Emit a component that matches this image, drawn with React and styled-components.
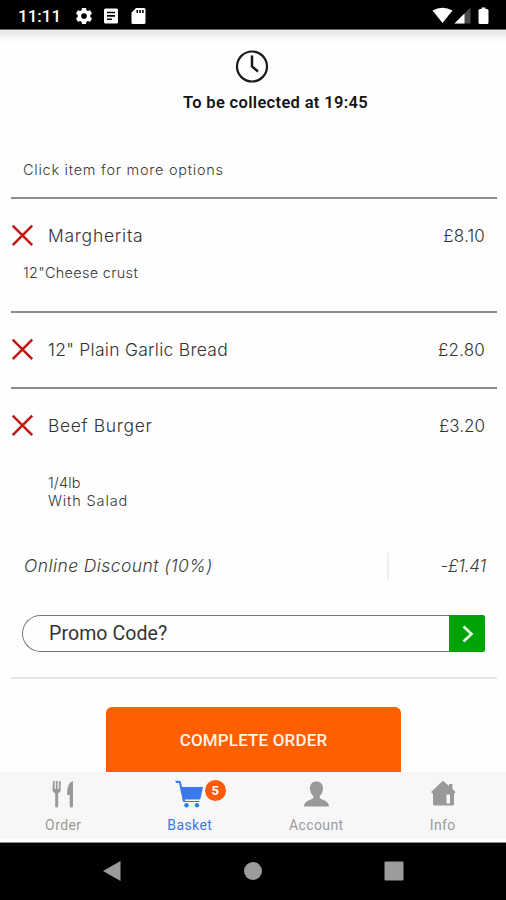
import React from 'react';
import styled, { createGlobalStyle } from 'styled-components';

const GlobalStyle = createGlobalStyle`
  * {
    box-sizing: border-box;
  }
  body {
    margin: 0;
    background: #ffffff;
    font-family: Roboto, sans-serif;
  }
  svg {
    display: block;
  }
`;

const Screen = styled.div`
  display: flex;
  flex-direction: column;
  width: 506px;
  height: 900px;
  overflow: hidden;
  background: #fefefe;
`;

const StatusBar = styled.div`
  display: flex;
  flex: none;
  justify-content: space-between;
  height: 30px;
  padding: 0 16px 0 18px;
  background: #000000;
  border-bottom: 1px solid #6c6c6c;
`;

const StatusGroup = styled.div`
  display: flex;
  align-items: center;
  padding-top: 2px;
`;

const Clock = styled.span`
  width: 56px;
  color: #ffffff;
  font-size: 17px;
  font-weight: 500;
`;

const TopShade = styled.div`
  flex: none;
  height: 14px;
  background: linear-gradient(#e8e8e8 0, #eeeeee 5px, #f6f6f6 6px, #fefefe 14px);
`;

const Content = styled.main`
  flex: none;
  height: 728px;
  overflow: hidden;
`;

const Header = styled.header`
  height: 108px;
  padding-top: 6px;
`;

const HeaderIcon = styled.div`
  padding-left: 235px;
`;

const Title = styled.h1`
  margin: 9px 0 0;
  padding-left: 183px;
  font-size: 16.5px;
  font-weight: 600;
  line-height: 20px;
  letter-spacing: 0.33px;
  color: #151515;
  white-space: nowrap;
`;

const Hint = styled.p`
  height: 45px;
  margin: 0;
  padding-left: 23px;
  font: 300 14.5px/36px Inter, sans-serif;
  letter-spacing: 0.74px;
  color: #3a3a3a;
`;

const Item = styled.section`
  height: ${(props) => props.$height};
  margin: 0 9px 0 11px;
  padding-top: 23px;
  border-top: 2px solid #8d8d8d;
`;

const ItemRow = styled.div`
  display: flex;
  align-items: center;
  height: 28px;
  padding-right: 12px;
`;

const ItemName = styled.span`
  flex: 1;
  margin-left: 14px;
  font: 300 17.5px/28px Inter, sans-serif;
  letter-spacing: ${(props) => props.$spacing};
  color: #333333;
`;

const Price = styled.span`
  font: 300 17px/28px Inter, sans-serif;
  letter-spacing: ${(props) => props.$spacing || '0'};
  color: #333333;
`;

const Note = styled.p`
  margin: 0;
  padding-left: ${(props) => props.$indent || '12px'};
  padding-top: ${(props) => props.$gap};
  font: 300 14.5px/18px Inter, sans-serif;
  letter-spacing: 0.3px;
  color: #363636;
`;

const NoteLine = styled.span`
  display: block;
  letter-spacing: ${(props) => props.$spacing};
`;

const Discount = styled.div`
  display: flex;
  align-items: center;
  height: 28px;
  margin-top: 42px;
  padding: 0 8px 0 13px;
  font: italic 300 17.5px/28px Inter, sans-serif;
  color: #3c3c3c;
`;

const DiscountLabel = styled.span`
  width: 363px;
  letter-spacing: 0.42px;
`;

const DiscountValue = styled.span`
  flex: 1;
  height: 27px;
  padding-right: 3px;
  border-left: 2px solid #efefef;
  font-size: 17px;
  line-height: 27px;
  letter-spacing: -0.2px;
  text-align: right;
`;

const Promo = styled.div`
  display: flex;
  width: 463px;
  height: 37px;
  margin: 35px 0 0 11px;
`;

const PromoField = styled.div`
  flex: 1;
  padding-left: 26px;
  border: 1px solid #777777;
  border-right: 0;
  border-radius: 19px 0 0 19px;
  font-size: 19.5px;
  line-height: 36px;
  letter-spacing: 0.1px;
  color: #333333;
`;

const PromoButton = styled.button`
  display: flex;
  align-items: center;
  justify-content: center;
  width: 36px;
  padding: 0 0 0 1px;
  border: 0;
  border-radius: 0 2px 2px 0;
  background: #00a406;
`;

const Checkout = styled.div`
  display: flex;
  justify-content: center;
  margin: 0 9px 0 11px;
  padding: 28px 1px 0 0;
  border-top: 2px solid #e4e7e7;
`;

const CompleteButton = styled.button`
  width: 295px;
  height: 80px;
  padding: 0 0 15px;
  border: 0;
  border-radius: 6px;
  background: #ff5f00;
  color: #fff2e6;
  font: 500 17px Roboto, sans-serif;
  letter-spacing: 0.15px;
`;

const TabBar = styled.nav`
  display: grid;
  flex: none;
  grid-template-columns: repeat(4, 1fr);
  height: 70px;
  background: #f7f7f7;
  border-bottom: 3px solid #ffffff;
`;

const Tab = styled.div`
  display: flex;
  flex-direction: column;
  align-items: center;
  padding-top: 8px;
  font-size: 14px;
  line-height: 18px;
  letter-spacing: 0.4px;
  color: ${(props) => (props.$active ? '#3b78ea' : '#9b9b9b')};
`;

const TabIcon = styled.div`
  position: relative;
  height: 36px;
`;

const Badge = styled.span`
  position: absolute;
  top: 0;
  left: 30px;
  width: 21px;
  height: 21px;
  border-radius: 50%;
  background: #ff5a08;
  color: #ffffff;
  font-size: 13px;
  font-weight: 700;
  line-height: 21px;
  letter-spacing: 0;
  text-align: center;
`;

const SystemBar = styled.div`
  display: flex;
  flex: 1;
  align-items: center;
  justify-content: space-between;
  padding: 0 102px 1px;
  background: #000000;
  border-top: 1px solid #8c8c8c;
`;

const Cross = () => (
  <svg width="23" height="24" viewBox="0 0 23 24">
    <path d="M1.700 1.700 21.200 21.200M21.200 1.700 1.700 21.200" stroke="#c01712" strokeWidth="2.500" />
  </svg>
);

const StatusIcons = () => (
  <svg width="72" height="18" viewBox="0 0 72 18" fill="#fff">
    <path
      fillRule="evenodd"
      d="M8 1h4l.5 2.2 1.4.8 2.2-.7 1.9 3.2-1.7 1.6v1.8l1.7 1.6-1.9 3.2-2.2-.7-1.4.8L12 17H8l-.5-2.2-1.4-.8-2.2.7L2 11.500l1.700-1.600V8.100L2 6.500l1.900-3.200 2.200.7 1.400-.8zM10 6.200a2.800 2.800 0 1 0 0 5.600 2.800 2.800 0 0 0 0-5.600z"
    />
    <path
      fillRule="evenodd"
      d="M31.500 1.500h11q1.500 0 1.500 1.500v12q0 1.500-1.500 1.500h-11q-1.500 0-1.500-1.500V3q0-1.500 1.500-1.500zM33 4.700v1.600h8V4.700zm0 3.400v1.600h8V8.100zm0 3.400v1.600h5v-1.600z"
    />
    <path
      fillRule="evenodd"
      d="M62 1h8q1.500 0 1.500 1.500v13q0 1.500-1.500 1.500H59q-1.500 0-1.500-1.500V5.500zM62.500 3v3h1.600V3zm2.800 0v3h1.600V3zm2.800 0v3h1.600V3z"
    />
  </svg>
);

const SignalIcons = () => (
  <svg width="58" height="18" viewBox="0 0 58 18" fill="#fff">
    <path d="M.5 3.500Q10.500-2 20.500 3.500L10.500 16z" />
    <path d="M22.500 16.500 38.500.5v16z" fill="#4b4b4b" />
    <path d="M22.500 16.500 32.500 6.500v10z" />
    <path d="M49.500.5h4V2H55q1.500 0 1.500 1.500v12q0 1.500-1.500 1.500h-7q-1.500 0-1.500-1.500v-12Q46.500 2 48 2h1.500z" />
  </svg>
);

const ClockIcon = () => (
  <svg width="34" height="34" viewBox="0 0 34 34" fill="none" stroke="#17191c">
    <circle cx="17" cy="16.500" r="15" strokeWidth="2.200" />
    <path d="M17 5.500v11l6 5" strokeWidth="2.500" />
  </svg>
);

const CutleryIcon = () => (
  <svg width="24" height="28" viewBox="0 0 24 28" fill="#999999">
    <path d="M2 1h1.600v8h1.200V1h1.800v8h1.200V1h1.800v8h.2c0 2.500-1 3.700-2.600 4.200V26q0 1.500-1.500 1.500T4.200 26V13.200C2.500 12.700 1.500 11.500 1.500 9z" />
    <path d="M22 1v25q0 1.500-1.700 1.500T18.700 26V15h-2.500C15.800 8 17.500 2.500 22 1z" />
  </svg>
);

const CartIcon = () => (
  <svg width="30" height="28" viewBox="0 0 30 28" fill="#3b78ea">
    <path d="M0 .8h4.200q1.200 0 1.600 1.200L7 7h21l-2.500 11.500q-.3 1-1.300 1H10v1.500h14.500v1H9q-1 0-1.200-1L4 3H1.200z" />
    <circle cx="11.500" cy="25.200" r="2.200" />
    <circle cx="22" cy="25.200" r="2.200" />
  </svg>
);

const PersonIcon = () => (
  <svg width="26" height="28" viewBox="0 0 26 28" fill="#999999">
    <path d="M13.500 1.500c4 0 6.500 2.500 6.500 6.500 0 3.500-1.200 6.500-3.200 8v2c2 2.200 9.200 2.500 9.200 8.500H1c0-6 7.200-6.300 9.200-8.500v-2C8.200 14.500 7 11.500 7 8c0-4 2.500-6.500 6.500-6.500z" />
  </svg>
);

const HouseIcon = () => (
  <svg width="26" height="28" viewBox="0 0 26 28" fill="#999999">
    <path
      fillRule="evenodd"
      d="M13 .8 19 6V4h3.500v5L25.500 12 24.500 13.500H24V24q0 1.500-1.500 1.500h-18Q3 25.500 3 24V13.500h-.5L1 12zM16.500 14.500v9h3.500v-9z"
    />
  </svg>
);

const App = () => {
  return (
    <Screen>
      <GlobalStyle />
      <StatusBar>
        <StatusGroup>
          <Clock>11:11</Clock>
          <StatusIcons />
        </StatusGroup>
        <StatusGroup>
          <SignalIcons />
        </StatusGroup>
      </StatusBar>
      <TopShade />
      <Content>
        <Header>
          <HeaderIcon>
            <ClockIcon />
          </HeaderIcon>
          <Title>To be collected at 19:45</Title>
        </Header>
        <Hint>Click item for more options</Hint>
        <Item $height="114px">
          <ItemRow>
            <Cross />
            <ItemName $spacing="0.75px">Margherita</ItemName>
            <Price $spacing="0.2px">£8.10</Price>
          </ItemRow>
          <Note $gap="14px">12"Cheese crust</Note>
        </Item>
        <Item $height="76px">
          <ItemRow>
            <Cross />
            <ItemName $spacing="0.27px">12" Plain Garlic Bread</ItemName>
            <Price $spacing="0.2px">£2.80</Price>
          </ItemRow>
        </Item>
        <Item $height="290px">
          <ItemRow>
            <Cross />
            <ItemName $spacing="0.65px">Beef Burger</ItemName>
            <Price>£3.20</Price>
          </ItemRow>
          <Note $indent="37px" $gap="34px">
            <NoteLine $spacing="0.1px">1/4lb</NoteLine>
            <NoteLine $spacing="0.85px">With Salad</NoteLine>
          </Note>
          <Discount>
            <DiscountLabel>Online Discount (10%)</DiscountLabel>
            <DiscountValue>-£1.41</DiscountValue>
          </Discount>
          <Promo>
            <PromoField>Promo Code?</PromoField>
            <PromoButton>
              <svg width="14" height="20" viewBox="0 0 14 20">
                <path d="M2.500 2.500 10.500 10l-8 7.500" fill="none" stroke="#e5ffe5" strokeWidth="2.600" />
              </svg>
            </PromoButton>
          </Promo>
        </Item>
        <Checkout>
          <CompleteButton>COMPLETE ORDER</CompleteButton>
        </Checkout>
      </Content>
      <TabBar>
        <Tab>
          <TabIcon>
            <CutleryIcon />
          </TabIcon>
          Order
        </Tab>
        <Tab $active>
          <TabIcon>
            <CartIcon />
            <Badge>5</Badge>
          </TabIcon>
          Basket
        </Tab>
        <Tab>
          <TabIcon>
            <PersonIcon />
          </TabIcon>
          Account
        </Tab>
        <Tab>
          <TabIcon>
            <HouseIcon />
          </TabIcon>
          Info
        </Tab>
      </TabBar>
      <SystemBar>
        <svg width="20" height="22" viewBox="0 0 20 22">
          <path d="M1 11 18.500 1v20z" fill="#9b9b9b" />
        </svg>
        <svg width="20" height="20" viewBox="0 0 20 20">
          <circle cx="10" cy="10" r="9" fill="#9b9b9b" />
        </svg>
        <svg width="20" height="20" viewBox="0 0 20 20">
          <rect x=".5" y=".5" width="19" height="19" rx="1" fill="#9b9b9b" />
        </svg>
      </SystemBar>
    </Screen>
  );
};

export default App;
